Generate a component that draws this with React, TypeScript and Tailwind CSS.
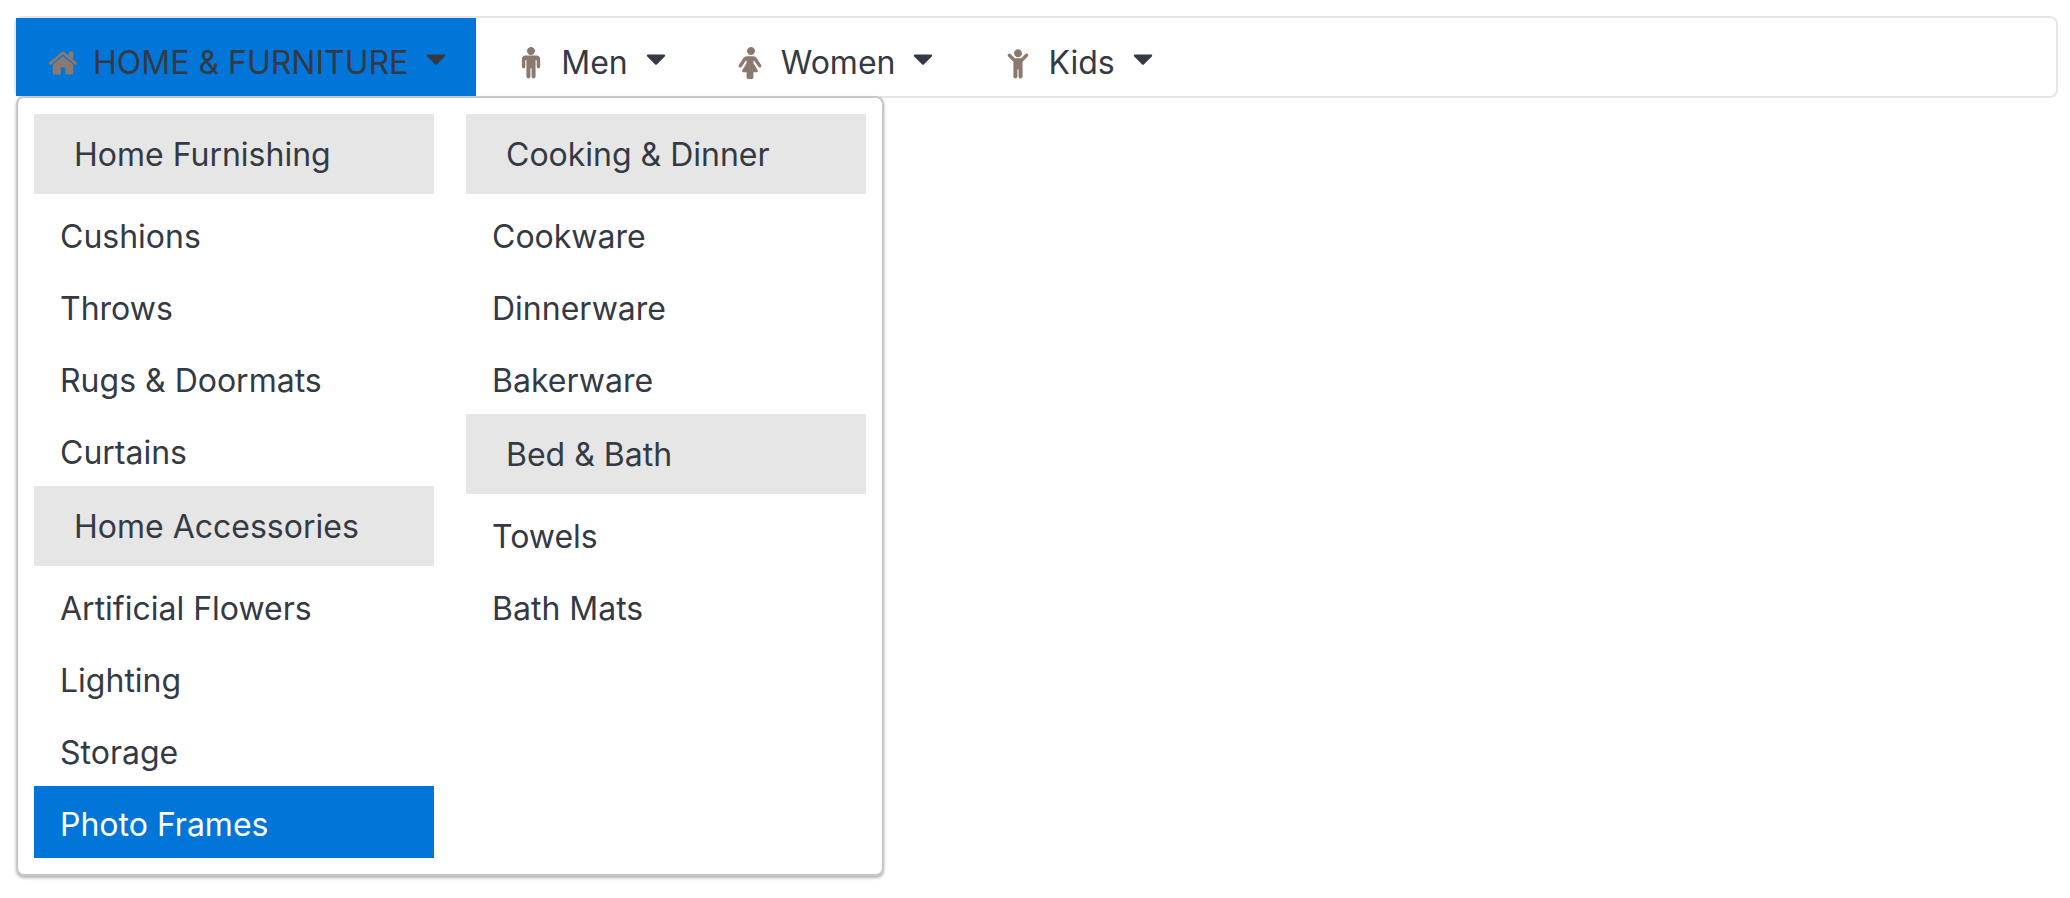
import React from "react";

const paths = {
  home: "M1472 992v480q0 26-19 45t-45 19h-384v-384h-256v384h-384q-26 0-45-19t-19-45v-480q0-1 .5-3t.5-3l575-474 575 474q1 2 1 6zm223-69l-62 74q-8 9-21 11h-3q-13 0-21-7l-692-577-692 577q-12 8-24 7-13-2-21-11l-62-74q-8-10-7-23.5t11-21.5l719-599q32-26 76-26t76 26l244 204v-195q0-14 9-23t23-9h192q14 0 23 9t9 23v408l219 182q10 8 11 21.5t-7 23.5z",
  male: "M1408 672v416q0 40-28 68t-68 28-68-28-28-68v-352h-64v912q0 46-33 79t-79 33-79-33-33-79v-464h-64v464q0 46-33 79t-79 33-79-33-33-79v-912h-64v352q0 40-28 68t-68 28-68-28-28-68v-416q0-80 56-136t136-56h640q80 0 136 56t56 136zm-288-448q0 93-65.5 158.5t-158.5 65.5-158.5-65.5-65.5-158.5 65.5-158.5 158.5-65.5 158.5 65.5 65.5 158.5z",
  female: "M1480 1056q0 40-28 68t-68 28q-51 0-80-43l-227-341h-45v132l247 411q9 15 9 33 0 26-19 45t-45 19h-192v272q0 46-33 79t-79 33h-160q-46 0-79-33t-33-79v-272h-192q-26 0-45-19t-19-45q0-18 9-33l247-411v-132h-45l-227 341q-29 43-80 43-40 0-68-28t-28-68q0-29 16-53l256-384q73-107 176-107h384q103 0 176 107l256 384q16 24 16 53zm-360-832q0 93-65.5 158.5t-158.5 65.5-158.5-65.5-65.5-158.5 65.5-158.5 158.5-65.5 158.5 65.5 65.5 158.5z",
  child: "M1444 532l-292 292v824q0 46-33 79t-79 33-79-33-33-79v-384h-64v384q0 46-33 79t-79 33-79-33-33-79v-824l-292-292q-28-28-28-68t28-68q29-28 68.5-28t67.5 28l228 228h368l228-228q28-28 68-28t68 28q28 29 28 68.5t-28 67.5zm-324-180q0 93-65.5 158.5t-158.5 65.5-158.5-65.5-65.5-158.5 65.5-158.5 158.5-65.5 158.5 65.5 65.5 158.5z",
  caret: "M1408 704q0 26-19 45l-448 448q-19 19-45 19t-45-19l-448-448q-19-19-19-45t19-45 45-19h896q26 0 45 19t19 45z",
};

function Icon({ name, className }: { name: keyof typeof paths; className: string }) {
  return (
    <svg viewBox="0 0 1792 1792" fill="currentColor" aria-hidden="true" className={`size-8 shrink-0 ${className}`}>
      <path d={paths[name]} />
    </svg>
  );
}

type Tab = { label: string; icon: keyof typeof paths; open?: boolean };

const tabs: Tab[] = [
  { label: "HOME & FURNITURE", icon: "home", open: true },
  { label: "Men", icon: "male" },
  { label: "Women", icon: "female" },
  { label: "Kids", icon: "child" },
];

type Group = { title: string; items: string[] };

const columns: Group[][] = [
  [
    { title: "Home Furnishing", items: ["Cushions", "Throws", "Rugs & Doormats", "Curtains"] },
    { title: "Home Accessories", items: ["Artificial Flowers", "Lighting", "Storage", "Photo Frames"] },
  ],
  [
    { title: "Cooking & Dinner", items: ["Cookware", "Dinnerware", "Bakerware"] },
    { title: "Bed & Bath", items: ["Towels", "Bath Mats"] },
  ],
];

const selected = "Photo Frames";

function MegaPanel() {
  return (
    <div className="absolute top-full left-0 z-10 flex gap-8 rounded-lg border-2 border-[#c8c8c8] bg-white p-4 shadow-[0_2px_3px_rgba(0,0,0,0.3)]">
      {columns.map((groups, i) => (
        <div key={i} className="w-[400px]">
          {groups.map((group) => (
            <section key={group.title}>
              <h3 className="mb-1 flex h-20 items-center bg-[#e6e6e6] px-10 pt-0.5">{group.title}</h3>
              <ul>
                {group.items.map((item) => (
                  <li key={item}>
                    <a
                      href="#"
                      className={`flex h-[72px] items-center px-[26px] pt-1.5 ${
                        item === selected ? "bg-[#0275d8] text-white" : ""
                      }`}
                    >
                      {item}
                    </a>
                  </li>
                ))}
              </ul>
            </section>
          ))}
        </div>
      ))}
    </div>
  );
}

export default function App() {
  return (
    <div className="min-h-screen bg-white pt-4 pr-3 pl-[14px] font-[Inter,sans-serif] text-[32px] leading-[48px] text-[#343a44]">
      <nav className="rounded-lg border-2 border-[#e6e6e6]">
        <ul className="flex gap-2">
          {tabs.map((tab) => (
            <li key={tab.label} className="relative">
              <button
                type="button"
                aria-expanded={!!tab.open}
                className={`flex h-[78px] items-center pt-3 pr-6 pl-[31px] ${tab.open ? "bg-[#0275d8]" : ""}`}
              >
                <Icon name={tab.icon} className="mr-[14px] text-[#8b7970]" />
                <span className="whitespace-nowrap">{tab.label}</span>
                <Icon name="caret" className="mb-2 ml-3" />
              </button>
              {tab.open && <MegaPanel />}
            </li>
          ))}
        </ul>
      </nav>
    </div>
  );
}
